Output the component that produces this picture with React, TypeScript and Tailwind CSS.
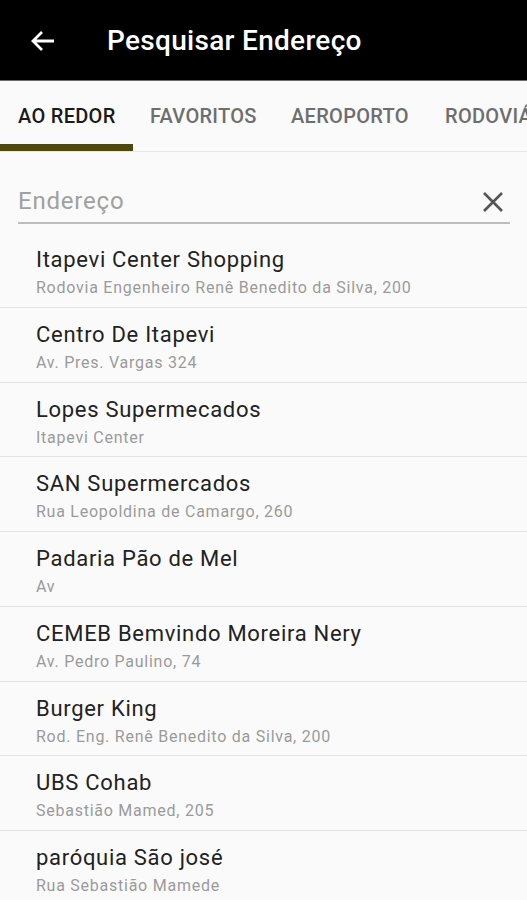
import React from "react";

const items = [
  ["Itapevi Center Shopping", "Rodovia Engenheiro Renê Benedito da Silva, 200"],
  ["Centro De Itapevi", "Av. Pres. Vargas 324"],
  ["Lopes Supermecados", "Itapevi Center"],
  ["SAN Supermercados", "Rua Leopoldina de Camargo, 260"],
  ["Padaria Pão de Mel", "Av"],
  ["CEMEB Bemvindo Moreira Nery", "Av. Pedro Paulino, 74"],
  ["Burger King", "Rod. Eng. Renê Benedito da Silva, 200"],
  ["UBS Cohab", "Sebastião Mamed, 205"],
  ["paróquia São josé", "Rua Sebastião Mamede"],
];

export default function App() {
  return (
    <div
      className="w-[527px] h-[900px] overflow-hidden bg-[#fafafa]"
      style={{ fontFamily: "Roboto, 'Noto Sans', sans-serif" }}
    >
      <div className="h-[81px] bg-black flex items-center border-b border-[#6b6b6b] pt-[2px]">
        <svg
          width="26"
          height="24"
          viewBox="0 0 26 24"
          className="ml-[29px] shrink-0"
          fill="none"
          stroke="white"
          strokeWidth="2.8"
          strokeLinecap="butt"
          strokeLinejoin="miter"
        >
          <path d="M25 12H4M13 3l-9 9 9 9" />
        </svg>
        <div className="ml-[52px] text-white text-[28px] font-medium tracking-[0.3px] whitespace-nowrap">
          Pesquisar Endereço
        </div>
      </div>
      <div className="h-[71px] flex border-b border-[#e6e6e6] bg-[#fafafa] whitespace-nowrap overflow-hidden">
        <div className="w-[133px] flex flex-col shrink-0">
          <div className="h-[63px] pl-[18px] pt-[23px] text-[20px] leading-[24px] tracking-[0.3px] font-medium text-[#1a1a1a]">
            AO REDOR
          </div>
          <div className="h-[7px] bg-[#4e4810]" />
        </div>
        <div className="w-[141px] shrink-0 pl-[17px] pt-[23px] text-[20px] leading-[24px] tracking-[0.3px] font-medium text-[#6e6e6e]">
          FAVORITOS
        </div>
        <div className="w-[154px] shrink-0 pl-[17px] pt-[23px] text-[20px] leading-[24px] tracking-[0.3px] font-medium text-[#6e6e6e]">
          AEROPORTO
        </div>
        <div className="shrink-0 pl-[17px] pt-[23px] text-[20px] leading-[24px] tracking-[0.3px] font-medium text-[#6e6e6e]">
          RODOVIÁRIA
        </div>
      </div>
      <div className="pl-[18px] pr-[17px] pt-[32px]">
        <div className="flex items-center justify-between border-b-2 border-[#bdbdbd] h-[40px] pr-[6px]">
          <span className="text-[24px] tracking-[0.8px] text-[#a0a0a0] pb-[5px]">Endereço</span>
          <svg width="22" height="22" viewBox="0 0 22 22" stroke="#555" strokeWidth="2.6" fill="none" className="mb-[2px]">
            <path d="M2 2l18 18M20 2L2 20" />
          </svg>
        </div>
      </div>
      <div className="mt-[9px]">
        {items.map(([t, s], i) => (
          <div key={i} className="h-[74.75px] border-b border-[#e3e3e3] pl-[36px] pt-[13px] whitespace-nowrap">
            <div className="text-[22px] leading-[28px] tracking-[0.7px] text-[#222]">{t}</div>
            <div className="text-[16px] leading-[20px] tracking-[0.75px] text-[#9a9a9a] mt-[4px]">{s}</div>
          </div>
        ))}
      </div>
    </div>
  );
}
